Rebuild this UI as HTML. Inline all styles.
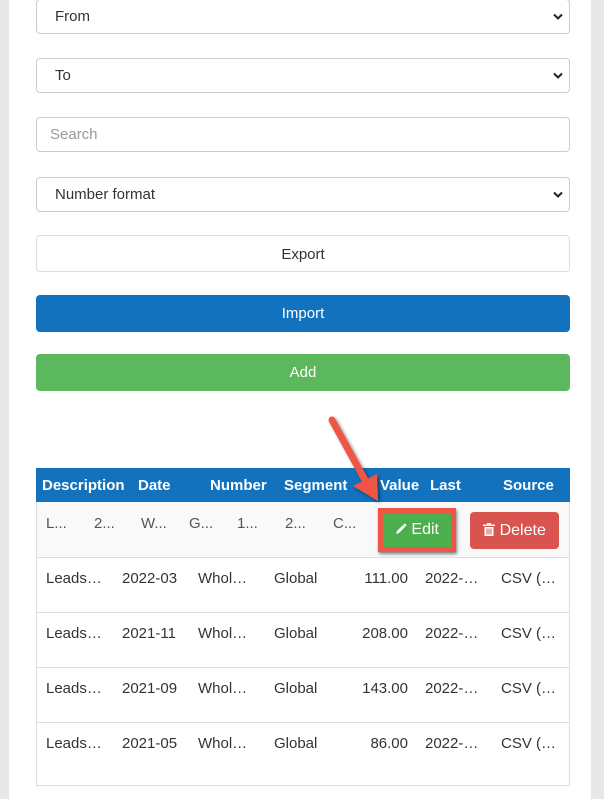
<!DOCTYPE html><html><head><style>
body{margin:0;width:604px;height:799px;background:#e8e8e8;font-family:"Liberation Sans",Arial,sans-serif;position:relative;overflow:hidden}
.panel{position:absolute;left:9px;top:0;width:582px;height:799px;background:#fff}
.f{position:absolute;left:36px;width:534px;border:1px solid #ccc;border-radius:4px;height:35px;box-sizing:border-box;font-size:15px;color:#333;line-height:34px;padding-left:18px;background:#fff}
.chev{position:absolute;right:6px;top:13px}
.b{position:absolute;left:36px;width:534px;height:37px;border-radius:4px;box-sizing:border-box;text-align:center;line-height:37px;font-size:15px}
.t{position:absolute;font-size:15px;color:#333;white-space:nowrap}
.h{position:absolute;font-size:15px;color:#fff;font-weight:bold;top:477px}
.line{position:absolute;left:36px;width:534px;height:1px;background:#ddd}
</style></head><body>
<div class="panel"></div>
<div class="f" style="top:-1px">From<svg class="chev" width="10" height="8"><path d="M1 1.5L5 5.5L9 1.5" stroke="#222" stroke-width="2" fill="none"/></svg></div>
<div class="f" style="top:58px">To<svg class="chev" width="10" height="8"><path d="M1 1.5L5 5.5L9 1.5" stroke="#222" stroke-width="2" fill="none"/></svg></div>
<div class="f" style="top:117px;color:#999;padding-left:13px">Search</div>
<div class="f" style="top:177px">Number format<svg class="chev" width="10" height="8"><path d="M1 1.5L5 5.5L9 1.5" stroke="#222" stroke-width="2" fill="none"/></svg></div>
<div class="b" style="top:235px;border:1px solid #ddd;color:#333">Export</div>
<div class="b" style="top:295px;background:#1372bd;color:#fff">Import</div>
<div class="b" style="top:354px;background:#5cb85c;color:#fff">Add</div>
<div style="position:absolute;left:36px;top:468px;width:534px;height:318px;border:1px solid #ddd;box-sizing:border-box"></div>
<div style="position:absolute;left:36px;top:468px;width:534px;height:34px;background:#1372bd"></div>
<div class="h" style="left:42px">Description</div><div class="h" style="left:138px">Date</div><div class="h" style="left:210px">Number</div><div class="h" style="left:284px">Segment</div><div class="h" style="left:380px">Value</div><div class="h" style="left:430px">Last</div><div class="h" style="left:503px">Source</div>
<div style="position:absolute;left:37px;top:502px;width:532px;height:55px;background:#f9f9f9"></div>
<div class="t" style="top:515px;left:46px;color:#555">L...</div><div class="t" style="top:515px;left:94px;color:#555">2...</div><div class="t" style="top:515px;left:141px;color:#555">W...</div><div class="t" style="top:515px;left:189px;color:#555">G...</div><div class="t" style="top:515px;left:237px;color:#555">1...</div><div class="t" style="top:515px;left:285px;color:#555">2...</div><div class="t" style="top:515px;left:333px;color:#555">C...</div>
<div style="position:absolute;left:378px;top:508px;width:78px;height:44px;background:#ef5545;box-shadow:1px 2px 3px rgba(0,0,0,.5)"></div>
<div style="position:absolute;left:383px;top:513px;width:68px;height:34px;background:#4cae4c;color:#fff;font-size:16px;line-height:34px;text-align:center"><svg width="12" height="12" style="vertical-align:-1px"><path d="M1 11L2 8L8 2L10 4L4 10Z" fill="#fff"/><path d="M9 1L11 3" stroke="#fff" stroke-width="2"/></svg> Edit</div>
<div style="position:absolute;left:470px;top:512px;width:89px;height:37px;background:#d9534f;border-radius:4px;color:#fff;font-size:16px;line-height:37px;text-align:center"><svg width="12" height="13" style="vertical-align:-1px"><rect x="0" y="1.5" width="12" height="1.5" fill="#fff"/><rect x="4" y="0" width="4" height="2" fill="#fff"/><path d="M1.5 4H10.5V13H1.5Z" fill="#fff"/><path d="M4 5.5V11.5M6 5.5V11.5M8 5.5V11.5" stroke="#d9534f"/></svg> Delete</div>
<div class="line" style="top:557px"></div><div class="line" style="top:612px"></div><div class="line" style="top:667px"></div><div class="line" style="top:722px"></div>
<svg style="position:absolute;left:0;top:0" width="604" height="799"><defs><filter id="s"><feDropShadow dx="2" dy="2" stdDeviation="1.5" flood-opacity=".45"/></filter></defs>
<g filter="url(#s)"><line x1="332" y1="420" x2="365" y2="480" stroke="#ef5545" stroke-width="7" stroke-linecap="round"/><polygon points="378,501 353,486 377,474" fill="#ef5545"/></g></svg>
<div class="t" style="top:570px;left:46px">Leads…</div><div class="t" style="top:570px;left:122px">2022-03</div><div class="t" style="top:570px;left:198px">Whol…</div><div class="t" style="top:570px;left:274px">Global</div><div class="t" style="top:570px;left:348px;width:60px;text-align:right">111.00</div><div class="t" style="top:570px;left:425px">2022-…</div><div class="t" style="top:570px;left:501px">CSV (…</div>
<div class="t" style="top:625px;left:46px">Leads…</div><div class="t" style="top:625px;left:122px">2021-11</div><div class="t" style="top:625px;left:198px">Whol…</div><div class="t" style="top:625px;left:274px">Global</div><div class="t" style="top:625px;left:348px;width:60px;text-align:right">208.00</div><div class="t" style="top:625px;left:425px">2022-…</div><div class="t" style="top:625px;left:501px">CSV (…</div>
<div class="t" style="top:680px;left:46px">Leads…</div><div class="t" style="top:680px;left:122px">2021-09</div><div class="t" style="top:680px;left:198px">Whol…</div><div class="t" style="top:680px;left:274px">Global</div><div class="t" style="top:680px;left:348px;width:60px;text-align:right">143.00</div><div class="t" style="top:680px;left:425px">2022-…</div><div class="t" style="top:680px;left:501px">CSV (…</div>
<div class="t" style="top:735px;left:46px">Leads…</div><div class="t" style="top:735px;left:122px">2021-05</div><div class="t" style="top:735px;left:198px">Whol…</div><div class="t" style="top:735px;left:274px">Global</div><div class="t" style="top:735px;left:348px;width:60px;text-align:right">86.00</div><div class="t" style="top:735px;left:425px">2022-…</div><div class="t" style="top:735px;left:501px">CSV (…</div>
</body></html>
